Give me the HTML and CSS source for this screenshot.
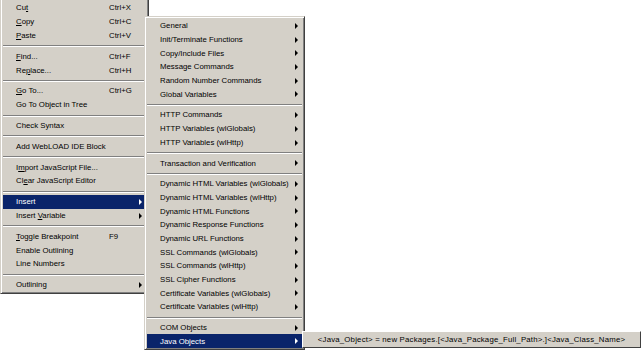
FILE: index.html
```html
<!DOCTYPE html>
<html lang="en">
<head>
    <meta charset="UTF-8">
    <title>Context menu</title>
    <link rel="stylesheet" href="styles.css">
</head>
<body>
<div class="desk">
    <div class="menu main">
        <div class="item"><span class="label">Cu<u>t</u></span><span class="key">Ctrl+X</span></div>
        <div class="item"><span class="label"><u>C</u>opy</span><span class="key">Ctrl+C</span></div>
        <div class="item"><span class="label"><u>P</u>aste</span><span class="key">Ctrl+V</span></div>
        <div class="sep"></div>
        <div class="item"><span class="label"><u>F</u>ind...</span><span class="key">Ctrl+F</span></div>
        <div class="item"><span class="label">Re<u>p</u>lace...</span><span class="key">Ctrl+H</span></div>
        <div class="sep"></div>
        <div class="item"><span class="label"><u>G</u>o To...</span><span class="key">Ctrl+G</span></div>
        <div class="item"><span class="label">Go To Object in Tree</span></div>
        <div class="sep"></div>
        <div class="item"><span class="label">Check Syntax</span></div>
        <div class="sep"></div>
        <div class="item"><span class="label">Add WebLOAD IDE Block</span></div>
        <div class="sep"></div>
        <div class="item"><span class="label">I<u>m</u>port JavaScript File...</span></div>
        <div class="item"><span class="label">Cl<u>e</u>ar JavaScript Editor</span></div>
        <div class="sep"></div>
        <div class="item sub active"><span class="label">Insert</span></div>
        <div class="item sub"><span class="label">Insert <u>V</u>ariable</span></div>
        <div class="sep"></div>
        <div class="item"><span class="label"><u>T</u>oggle Breakpoint</span><span class="key">F9</span></div>
        <div class="item"><span class="label">Enable Outlining</span></div>
        <div class="item"><span class="label">Line Numbers</span></div>
        <div class="sep"></div>
        <div class="item sub"><span class="label">Outlining</span></div>
    </div>

    <div class="menu insert">
        <div class="item sub"><span class="label">General</span></div>
        <div class="item sub"><span class="label">Init/Terminate Functions</span></div>
        <div class="item sub"><span class="label">Copy/Include Files</span></div>
        <div class="item sub"><span class="label">Message Commands</span></div>
        <div class="item sub"><span class="label">Random Number Commands</span></div>
        <div class="item sub"><span class="label">Global Variables</span></div>
        <div class="sep"></div>
        <div class="item sub"><span class="label">HTTP Commands</span></div>
        <div class="item sub"><span class="label">HTTP Variables (wlGlobals)</span></div>
        <div class="item sub"><span class="label">HTTP Variables (wlHttp)</span></div>
        <div class="sep"></div>
        <div class="item sub"><span class="label">Transaction and Verification</span></div>
        <div class="sep"></div>
        <div class="item sub"><span class="label">Dynamic HTML Variables (wlGlobals)</span></div>
        <div class="item sub"><span class="label">Dynamic HTML Variables (wlHttp)</span></div>
        <div class="item sub"><span class="label">Dynamic HTML Functions</span></div>
        <div class="item sub"><span class="label">Dynamic Response Functions</span></div>
        <div class="item sub"><span class="label">Dynamic URL Functions</span></div>
        <div class="item sub"><span class="label">SSL Commands (wlGlobals)</span></div>
        <div class="item sub"><span class="label">SSL Commands (wlHttp)</span></div>
        <div class="item sub"><span class="label">SSL Cipher Functions</span></div>
        <div class="item sub"><span class="label">Certificate Variables (wlGlobals)</span></div>
        <div class="item sub"><span class="label">Certificate Variables (wlHttp)</span></div>
        <div class="sep"></div>
        <div class="item sub"><span class="label">COM Objects</span></div>
        <div class="item sub active"><span class="label">Java Objects</span></div>
    </div>

    <div class="tip">&lt;Java_Object&gt; = new Packages.[&lt;Java_Package_Full_Path&gt;.]&lt;Java_Class_Name&gt;</div>
</div>
</body>
</html>
```
FILE: styles.css
```css
html,body{
    margin: 0;
    background-color: #fff;
}
.desk{
    position: relative;
    width: 642px;
    height: 350px;
    overflow: hidden;
    font-family: "Liberation Sans", Arial, sans-serif;
    font-size: 7.8px;
    color: #000;
}
.menu{
    position: absolute;
    box-sizing: border-box;
    background-color: #d4d0c8;
    border: 1px solid;
    border-color: #d4d0c8 #404040 #404040 #d4d0c8;
    box-shadow: inset 1px 1px #fff, inset -1px -1px #808080;
    padding: 2px 2px 1px;
}
.menu.main{
    left: 0;
    top: -2px;
    width: 149px;
}
.menu.insert{
    left: 144px;
    top: 16px;
    width: 161px;
}
.item{
    position: relative;
    display: flex;
    align-items: center;
    height: 13.8px;
    padding-left: 13px;
    white-space: nowrap;
}
.insert .item{
    height: 13.7px;
}
.item .label{
    flex: 1;
}
.item .key{
    width: 37px;
}
.item u{
    text-decoration-thickness: 1px;
    text-underline-offset: 1px;
}
.item.active{
    background-color: #0a246a;
    color: #fff;
}
.item.sub:after{
    content: '';
    position: absolute;
    right: 4px;
    top: 4px;
    border-left: 3px solid #000;
    border-top: 3px solid transparent;
    border-bottom: 3px solid transparent;
}
.item.sub.active:after{
    border-left-color: #fff;
}
.sep{
    height: 0;
    margin: 3px 0 2px;
    border-top: 1px solid #808080;
    border-bottom: 1px solid #fff;
}
.tip{
    position: absolute;
    left: 302px;
    top: 331px;
    width: 339px;
    height: 17px;
    box-sizing: border-box;
    padding-bottom: 1px;
    background-color: #d4d0c8;
    border: 1px solid;
    border-color: #fff #404040 #404040 #fff;
    display: flex;
    align-items: center;
    justify-content: center;
    white-space: nowrap;
    letter-spacing: 0.2px;
}
```
